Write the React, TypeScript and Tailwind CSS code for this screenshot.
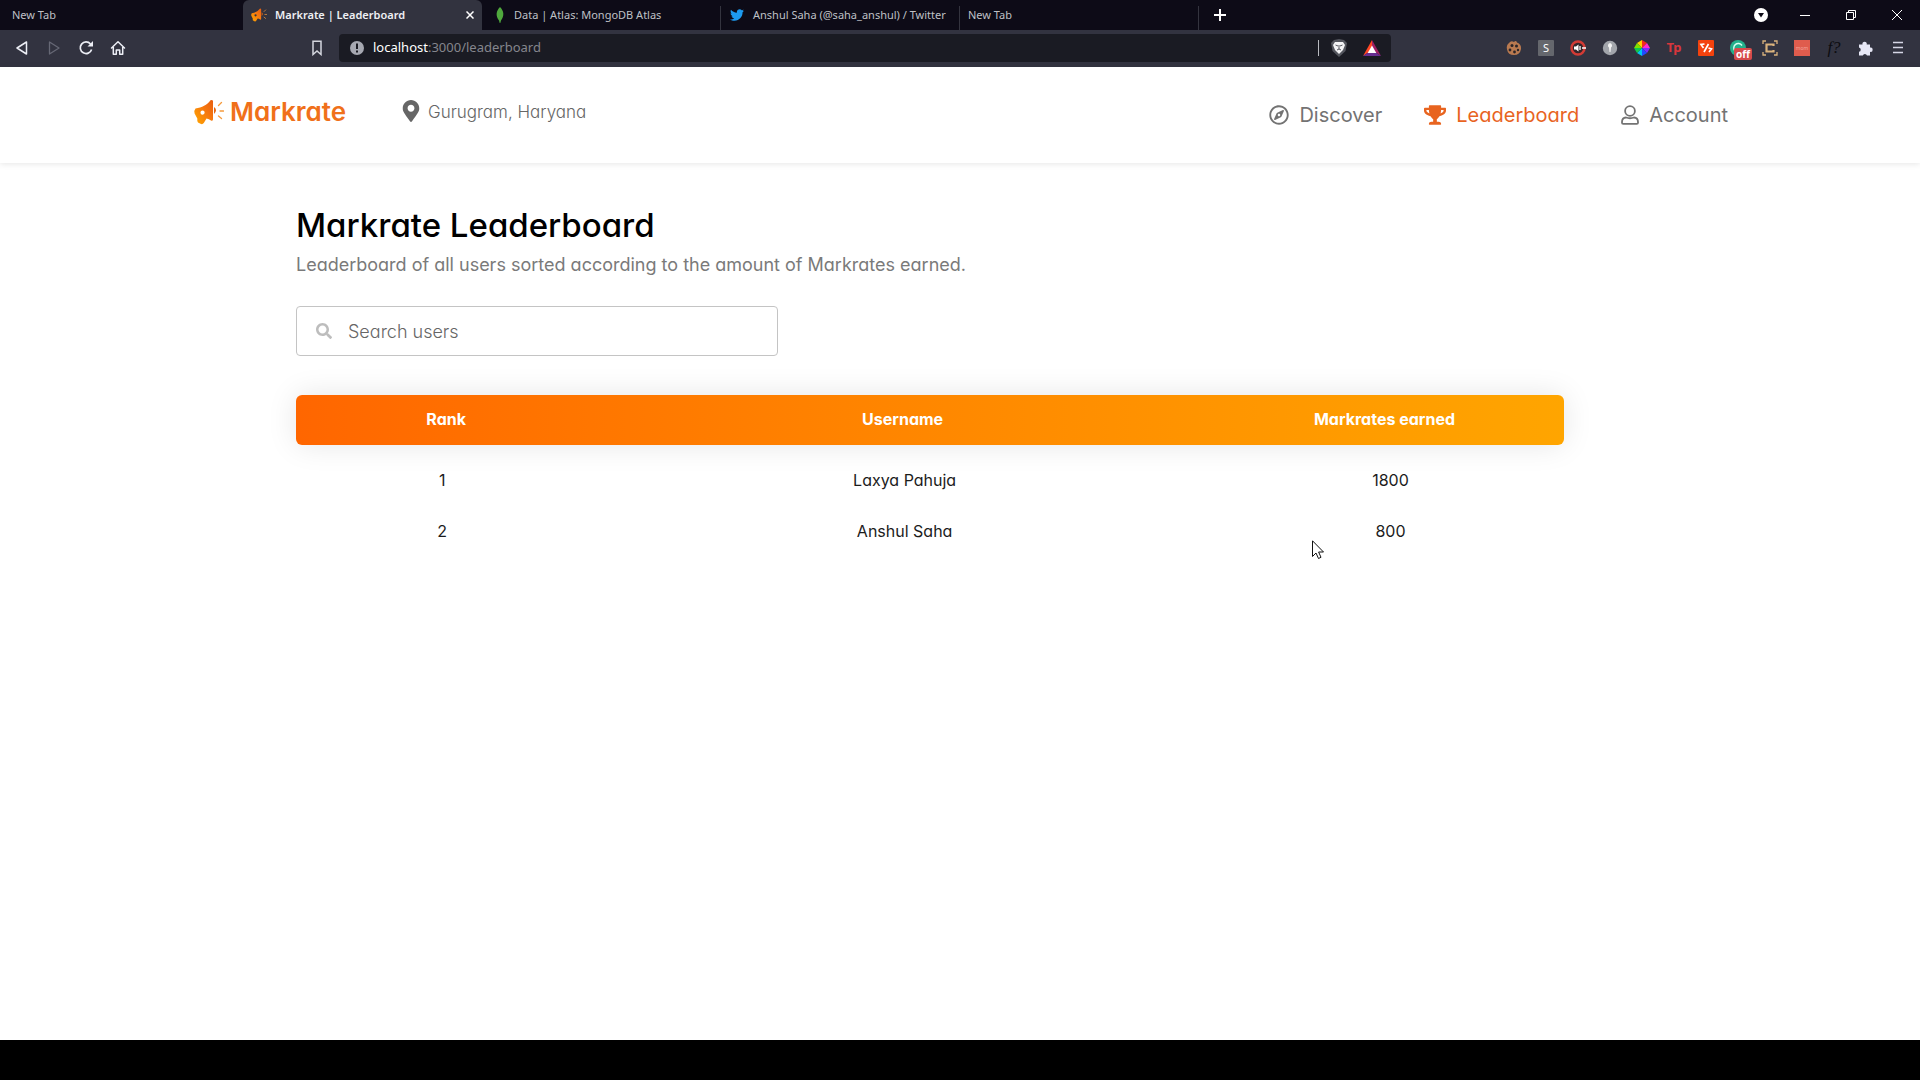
import type { ReactNode } from "react";
import { FaMapMarkerAlt, FaRegCompass, FaTrophy, FaSearch, FaTwitter } from "react-icons/fa";

function Megaphone({ className }: { className: string }) {
  return (
    <svg className={className} viewBox="0 0 30 26" aria-hidden="true">
      <defs>
        <linearGradient id="horn" x1="0" y1="1" x2="1" y2="0">
          <stop offset="0" stopColor="#ffa800" />
          <stop offset="0.6" stopColor="#f5760f" />
          <stop offset="1" stopColor="#e85d10" />
        </linearGradient>
      </defs>
      <path
        fillRule="evenodd"
        fill="url(#horn)"
        d="M1.500 9.500C8 8.500 13 6 16.500 1.200Q18.500.3 19 2V20.500Q18.500 22.500 17 21.500Q15 19.800 12.500 19.500L9.800 24Q8.500 25.800 6.500 24.800L4 23.500Q3 22.500 3.300 19.500L.6 14.500Q0 11 1.500 9.500ZM8.500 11.500A2.100 2.100 0 1 0 8.600 15.700A2.100 2.100 0 1 0 8.500 11.500Z"
      />
      <path fill="#e8650f" d="M20 8Q24 11 20 15Z" />
      <path d="M24.500 6.500L27.500 3.500M26 12H29.500M24.500 17L27.500 19.500" stroke="#f59a3c" strokeWidth="1.300" strokeLinecap="round" />
    </svg>
  );
}

function Leaf() {
  return (
    <svg className="h-4 w-3" viewBox="0 0 12 16" aria-hidden="true">
      <path d="M6 0C10 4 10.500 9 7 13.500L6.300 16H5.700L5 13.500C1.500 9 2 4 6 0Z" fill="#4fa83d" />
    </svg>
  );
}

function Tab({ title, icon, active, divider }: { title: string; icon?: ReactNode; active?: boolean; divider?: boolean }) {
  return (
    <div
      className={
        active
          ? "flex w-[239px] items-center rounded-t-md bg-[#32333f] pr-1.5 pl-2 font-semibold text-[#eef0f4]"
          : "relative flex w-[239px] items-center pl-2 text-[#bfc0c6]"
      }
    >
      <button type="button" className="flex flex-1 items-center gap-2 text-left whitespace-nowrap">
        {icon}
        <span>{title}</span>
      </button>
      {active && (
        <button type="button" aria-label="Close tab" className="p-0.5">
          <svg className="h-2 w-2" viewBox="0 0 8 8">
            <path d="M0.500 0.500L7.500 7.500M7.500 0.500L0.500 7.500" stroke="#fff" strokeWidth="1.500" />
          </svg>
        </button>
      )}
      {divider && <span className="absolute right-0 bottom-0 h-6 w-px bg-[#34343f]" />}
    </div>
  );
}

const extensions: { name: string; art: ReactNode }[] = [
  {
    name: "Cookies",
    art: (
      <>
        <path d="M3 3Q5 0 8 2Q10 0 11 2.500Q15.500 4 15 9Q14 15 8 15Q2 15 1 9.500Q0 5 3 3Z" fill="#b97a50" />
        <g fill="#2b2528">
          <circle cx="6" cy="5.500" r="1.500" /><circle cx="10.500" cy="6" r="1.500" /><circle cx="4" cy="10" r="1.400" />
          <circle cx="8.500" cy="12" r="1.400" /><circle cx="12" cy="10" r="1.200" />
        </g>
      </>
    ),
  },
  {
    name: "Stylus",
    art: (
      <>
        <rect width="16" height="16" rx="1" fill="#65676d" />
        <text x="8" y="12" textAnchor="middle" fontSize="11" fill="#fff">S</text>
      </>
    ),
  },
  {
    name: "Volume",
    art: (
      <>
        <circle cx="8" cy="8" r="6.500" fill="#33262b" stroke="#d23b35" strokeWidth="2.500" />
        <path d="M4 6.500H6L8.500 4.500V11.500L6 9.500H4Z" fill="#fff" />
        <path d="M10 6V10M12 8H16" stroke="#fff" strokeWidth="1.300" />
      </>
    ),
  },
  {
    name: "Hints",
    art: (
      <>
        <circle cx="8" cy="8" r="7.200" fill="#a2a5ab" />
        <path d="M8 3A2.500 2.500 0 0 1 9 7.500L8.500 12H7.500L7 7.500A2.500 2.500 0 0 1 8 3Z" fill="#f2f2f2" />
      </>
    ),
  },
  {
    name: "Color picker",
    art: (
      <>
        <path d="M8 8V0L3 3Z" fill="#ffd000" /><path d="M8 8V0L13 3Z" fill="#f22b1d" />
        <path d="M8 8L13 3L16 8Z" fill="#ff2bd0" /><path d="M8 8H16L13 13Z" fill="#7b2cff" />
        <path d="M8 8L13 13L8 16Z" fill="#1f4dff" /><path d="M8 8V16L3 13Z" fill="#00c8f0" />
        <path d="M8 8L3 13L0 8Z" fill="#12c94b" /><path d="M8 8H0L3 3Z" fill="#7fe000" />
      </>
    ),
  },
  {
    name: "Toptal",
    art: <text x="8" y="12" textAnchor="middle" fontSize="13" fontWeight="700" fill="#d8363c">Tp</text>,
  },
  {
    name: "Code",
    art: (
      <>
        <rect width="16" height="16" rx="1" fill="#f4420d" />
        <path d="M6.500 4L3 4.500L5.500 8M10.500 4L6 12M10.500 8L13.500 9L11 12" stroke="#fff" strokeWidth="1.700" fill="none" />
      </>
    ),
  },
  {
    name: "Grammar",
    art: (
      <>
        <circle cx="8" cy="8" r="8" fill="#22b08b" />
        <path d="M12 5.500A4.500 4.500 0 1 0 12 10.500" stroke="#d9fff2" strokeWidth="1.400" fill="none" />
      </>
    ),
  },
  {
    name: "Capture",
    art: (
      <g fill="none" stroke="#d9b27c">
        <path d="M1 4V1H4M12 1H15V4M15 12V15H12M4 15H1V12" strokeWidth="1.300" />
        <path d="M11.500 6V4.500H4.500V11.500H11.500V10" strokeWidth="2.200" />
      </g>
    ),
  },
  {
    name: "Momentum",
    art: (
      <>
        <rect width="16" height="16" fill="#df5c4d" />
        <text x="8" y="10" textAnchor="middle" fontSize="5" fill="#f3a59b">mom</text>
      </>
    ),
  },
  {
    name: "Font finder",
    art: <text x="8" y="13" textAnchor="middle" fontSize="17" fontStyle="italic" fontFamily="Liberation Serif, serif" fill="#0c0c10">f?</text>,
  },
  {
    name: "Extensions",
    art: (
      <path
        d="M1 4.500H4.500A2.200 2.200 0 1 1 8.700 4.500H12V7.500A2.200 2.200 0 1 1 12 11.800V15.500H9A2.200 2.200 0 0 0 4.800 15.500H1V11.800A2.200 2.200 0 0 0 1 7.500Z"
        fill="#e6e7f5"
      />
    ),
  },
  {
    name: "Menu",
    art: <path d="M3 2.500H13M3 7.500H13M3 12.500H13" stroke="#d6d7e6" strokeWidth="1.600" />,
  },
];

function BrowserChrome() {
  return (
    <div className="font-['Noto_Sans',sans-serif]">
      <div className="flex h-[30px] bg-[#0d0b17] pl-1 text-[11px]">
        <Tab title="New Tab" />
        <Tab active title="Markrate | Leaderboard" icon={<Megaphone className="h-4 w-4" />} />
        <Tab divider title="Data | Atlas: MongoDB Atlas" icon={<span className="ml-1 flex"><Leaf /></span>} />
        <Tab divider title="Anshul Saha (@saha_anshul) / Twitter" icon={<FaTwitter className="h-3.5 w-4 text-[#1d9bf0]" />} />
        <Tab divider title="New Tab" />
        <button type="button" aria-label="New tab" className="w-9 pl-[15px]">
          <svg className="h-3 w-3" viewBox="0 0 12 12">
            <path d="M6 0V12M0 6H12" stroke="#fff" strokeWidth="2" />
          </svg>
        </button>
        <div className="ml-auto flex items-center">
          <button type="button" aria-label="Search tabs" className="flex w-[42px] justify-center">
            <svg className="h-3.5 w-3.5" viewBox="0 0 14 14">
              <circle cx="7" cy="7" r="7" fill="#fff" />
              <path d="M4 5H10L7 9.500Z" fill="#0d0b17" />
            </svg>
          </button>
          <button type="button" aria-label="Minimize" className="flex w-[46px] justify-center">
            <span className="h-px w-2.5 bg-white" />
          </button>
          <button type="button" aria-label="Restore" className="flex w-[46px] justify-center">
            <svg className="h-2.5 w-2.5" viewBox="0 0 10 10" fill="none" stroke="#fff">
              <path d="M0.500 2.500H7.500V9.500H0.500ZM2.500 2.500V0.500H9.500V7.500H7.500" />
            </svg>
          </button>
          <button type="button" aria-label="Close" className="flex w-[46px] justify-center">
            <svg className="h-2.5 w-2.5" viewBox="0 0 10 10" stroke="#fff">
              <path d="M0 0L10 10M10 0L0 10" />
            </svg>
          </button>
        </div>
      </div>

      <div className="flex h-[37px] items-center bg-[#323340] pb-px pl-1.5">
        <button type="button" aria-label="Back" className="flex w-8 justify-center">
          <svg className="h-3.5 w-3.5" viewBox="0 0 14 14">
            <path d="M11.500 1V13L2 7Z" fill="none" stroke="#eceef5" strokeWidth="1.500" strokeLinejoin="round" />
          </svg>
        </button>
        <button type="button" aria-label="Forward" className="flex w-8 justify-center">
          <svg className="h-3.5 w-3.5" viewBox="0 0 14 14">
            <path d="M2.500 1V13L12 7Z" fill="none" stroke="#666875" strokeWidth="1.300" strokeLinejoin="round" />
          </svg>
        </button>
        <button type="button" aria-label="Reload" className="flex w-8 justify-center">
          <svg className="h-4 w-4" viewBox="0 0 16 16">
            <path d="M12.500 4A5.800 5.800 0 1 0 13.600 9.500" fill="none" stroke="#eceef5" strokeWidth="1.700" />
            <path d="M9.500 6.500H15V1Z" fill="#eceef5" />
          </svg>
        </button>
        <button type="button" aria-label="Home" className="flex w-8 justify-center">
          <svg className="h-4 w-4" viewBox="0 0 16 16" fill="none" stroke="#eceef5" strokeWidth="1.500" strokeLinejoin="round" strokeLinecap="round">
            <path d="M1.500 8L8 1.800L14.500 8M3.300 7V14.300H6.300V10H9.700V14.300H12.700V7" />
          </svg>
        </button>
        <button type="button" aria-label="Bookmark this page" className="ml-[167px] flex w-8 justify-center">
          <svg className="h-4 w-3" viewBox="0 0 12 16">
            <path d="M2 1.200H10V14.500L6 11L2 14.500Z" fill="none" stroke="#d4d6de" strokeWidth="1.500" />
          </svg>
        </button>
        <div className="ml-1.5 flex h-7 flex-1 items-center rounded bg-[#1a1b23] px-2.5">
          <svg className="mr-2 h-4 w-4" viewBox="0 0 16 16" aria-hidden="true">
            <circle cx="8" cy="8" r="7" fill="#a6a8b1" />
            <path d="M8 3.500V9M8 10.500V12.500" stroke="#1a1b23" strokeWidth="2" />
          </svg>
          <p className="flex-1 text-[13px] text-[#85868d]">
            <span className="text-white">localhost</span>:3000/leaderboard
          </p>
          <span className="h-4 w-px bg-[#b8bac0]" />
          <button type="button" aria-label="Shields" className="ml-3 flex">
            <svg className="h-[18px] w-4" viewBox="0 0 16 18">
              <path d="M3 1L8 0L13 1L16 4L14.500 12L8 18L1.500 12L0 4Z" fill="#54565e" />
              <path d="M4 3H12L14 6L12 11L8 15L4 11L2 6Z" fill="#f4f4f6" />
              <path d="M4.500 6L7 7M11.500 6L9 7M8 6V10M6 11L8 10L10 11" stroke="#54565e" fill="none" />
            </svg>
          </button>
          <button type="button" aria-label="Rewards" className="ml-4 flex">
            <svg className="h-4 w-[18px]" viewBox="0 0 18 16">
              <path d="M9 0L0 16L9 10Z" fill="#ff4724" />
              <path d="M9 0L18 16L9 10Z" fill="#9e1f63" />
              <path d="M0 16H18L9 10Z" fill="#662d91" />
              <path d="M9 5.500L13.300 13H4.700Z" fill="#fff" />
            </svg>
          </button>
        </div>
        <div className="ml-[107px] flex pr-1.5">
          {extensions.map(({ name, art }) => (
            <button key={name} type="button" aria-label={name} className="relative flex w-8 justify-center">
              <svg className="h-4 w-4 overflow-visible" viewBox="0 0 16 16">{art}</svg>
              {name === "Grammar" && (
                <span className="absolute top-2 left-3 rounded-xs bg-[#d64b4b] px-0.5 text-[10px] leading-3 font-bold text-white">off</span>
              )}
            </button>
          ))}
        </div>
      </div>
    </div>
  );
}

function UserIcon() {
  return (
    <svg className="h-5 w-[18px]" viewBox="0 0 18 20" fill="none" stroke="currentColor" strokeWidth="1.800" aria-hidden="true">
      <circle cx="9" cy="6" r="4.900" />
      <path d="M5 12.500Q9 14 13 12.500Q17 12.800 17 17V17.700Q17 18.800 15.800 18.800H2.200Q1 18.800 1 17.700V17Q1 12.800 5 12.500Z" />
    </svg>
  );
}

const users = [
  { rank: 1, name: "Laxya Pahuja", earned: 1800 },
  { rank: 2, name: "Anshul Saha", earned: 800 },
];

export default function App() {
  return (
    <div className="relative flex min-h-screen flex-col bg-white">
      <BrowserChrome />
      <div className="flex flex-1 flex-col font-[Inter,sans-serif] font-normal [font-feature-settings:'cv11']">
        <header className="shadow-[0_1px_6px_rgba(0,0,0,0.1)]">
          <div className="mx-auto flex h-24 max-w-screen-2xl items-center text-[#737373]">
            <a href="#home" className="flex items-center gap-1.5 pb-1.5 pl-0.5 text-[26px] leading-8 font-semibold text-[#f0701a]">
              <Megaphone className="h-[26px] w-[30px]" />
              Markrate
            </a>
            <p className="ml-14 flex items-center gap-2 pb-1 text-[17px] font-light text-[#666]">
              <FaMapMarkerAlt className="mb-1 h-[22px] w-[18px]" />
              Gurugram, Haryana
            </p>
            <nav className="ml-auto flex items-center gap-[42px] text-xl">
              <a href="#discover" className="flex items-center gap-2.5"><FaRegCompass className="h-5 w-5" />Discover</a>
              <a href="#leaderboard" className="flex items-center gap-2.5 text-[#e8641f]"><FaTrophy className="h-5 w-[22px]" />Leaderboard</a>
              <a href="#account" className="flex items-center gap-2.5"><UserIcon />Account</a>
            </nav>
          </div>
        </header>

        <main className="mx-auto w-full max-w-screen-2xl flex-1 pt-10 pr-41 pl-26">
          <h1 className="text-[33px] leading-11 font-medium text-black">Markrate Leaderboard</h1>
          <p className="mt-1 text-lg leading-7 text-[#7a7a7a]">Leaderboard of all users sorted according to the amount of Markrates earned.</p>
          <div className="mt-[27px] flex h-[50px] w-[482px] items-center gap-4 rounded border border-[#c4c4c4] pl-[19px]">
            <FaSearch className="h-4 w-4 text-[#bdbdbd]" />
            <input
              type="text"
              aria-label="Search users"
              placeholder="Search users"
              className="h-full flex-1 text-lg font-light outline-none placeholder:text-[#666]"
            />
          </div>
          <table className="mt-[39px] w-full table-fixed rounded-md text-center">
            <colgroup>
              <col className="w-[24%]" />
              <col className="w-[48%]" />
              <col className="w-[28%]" />
            </colgroup>
            <thead className="rounded-md bg-linear-to-r from-[#ff6600] to-[#ffa500] text-base text-white shadow-[0_0_30px_rgba(0,0,0,0.1)]">
              <tr className="h-[50px]">
                <th className="rounded-l-md pr-1 pb-0.5 font-bold">Rank</th>
                <th className="pr-1 pb-0.5 font-bold">Username</th>
                <th className="rounded-r-md pr-1 pb-0.5 font-bold">Markrates earned</th>
              </tr>
            </thead>
            <tbody className="text-base text-[#1c1c1c]">
              <tr className="h-[9px]"><td colSpan={3} /></tr>
              {users.map((u) => (
                <tr key={u.rank} className="h-[51px]">
                  <td className="pr-3">{u.rank}</td>
                  <td>{u.name}</td>
                  <td className="pl-2">{u.earned}</td>
                </tr>
              ))}
            </tbody>
          </table>
        </main>
      </div>
      <footer className="h-10 bg-black" />
      <svg className="absolute top-[540px] left-[1312px] h-5 w-3" viewBox="0 0 12 20" aria-hidden="true">
        <path d="M0.500 0.800V16.500L4 13L6.500 18.500L9 17.300L6.600 12H11.500Z" fill="#fff" stroke="#111" />
      </svg>
    </div>
  );
}
